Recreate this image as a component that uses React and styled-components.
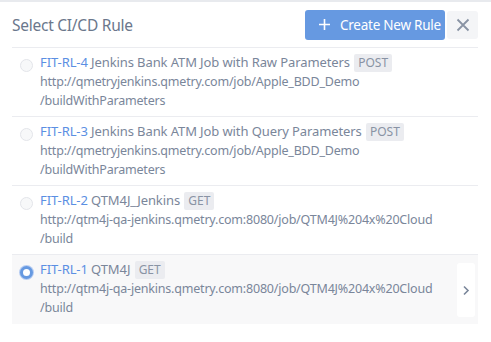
import React, { useState } from 'react';
import styled, { createGlobalStyle } from 'styled-components';

const rules = [
  {
    id: 'FIT-RL-4',
    name: 'Jenkins Bank ATM Job with Raw Parameters',
    method: 'POST',
    url: ['http://qmetryjenkins.qmetry.com/job/Apple_BDD_Demo', '/buildWithParameters'],
  },
  {
    id: 'FIT-RL-3',
    name: 'Jenkins Bank ATM Job with Query Parameters',
    method: 'POST',
    url: ['http://qmetryjenkins.qmetry.com/job/Apple_BDD_Demo', '/buildWithParameters'],
  },
  {
    id: 'FIT-RL-2',
    name: 'QTM4J_Jenkins',
    method: 'GET',
    url: ['http://qtm4j-qa-jenkins.qmetry.com:8080/job/QTM4J%204x%20Cloud', '/build'],
  },
  {
    id: 'FIT-RL-1',
    name: 'QTM4J',
    method: 'GET',
    url: ['http://qtm4j-qa-jenkins.qmetry.com:8080/job/QTM4J%204x%20Cloud', '/build'],
  },
];

const App = () => {
  const [selected, setSelected] = useState('FIT-RL-1');

  return (
    <>
      <GlobalStyle />
      <Panel>
        <Header>
          <Title>Select CI/CD Rule</Title>
          <Actions>
            <CreateButton>
              <svg width="13" height="13" viewBox="0 0 13 13">
                <path d="M6.5 1v11M1 6.5h11" stroke="#fff" strokeWidth="1.6" />
              </svg>
              Create New Rule
            </CreateButton>
            <CloseButton aria-label="close">
              <svg width="14" height="14" viewBox="0 0 14 14">
                <path d="M1.5 1.5l11 11M12.5 1.5l-11 11" stroke="#8993a4" strokeWidth="1.8" />
              </svg>
            </CloseButton>
          </Actions>
        </Header>
        <List>
          {rules.map((rule) => {
            const active = rule.id === selected;
            return (
              <Row key={rule.id} $active={active} onClick={() => setSelected(rule.id)}>
                <Radio $checked={active} />
                <Body>
                  <NameLine>
                    <RuleId>{rule.id}</RuleId> {rule.name} <Method>{rule.method}</Method>
                  </NameLine>
                  <Line>{rule.url[0]}</Line>
                  <Line>{rule.url[1]}</Line>
                </Body>
                {active && (
                  <Chevron>
                    <svg width="8" height="11" viewBox="0 0 8 11">
                      <path d="M2 1.5l4 4-4 4" fill="none" stroke="#7a869a" strokeWidth="1.6" />
                    </svg>
                  </Chevron>
                )}
              </Row>
            );
          })}
        </List>
      </Panel>
    </>
  );
};

export default App;

const GlobalStyle = createGlobalStyle`
  body {
    margin: 0;
    background: #fff;
    font-family: "Noto Sans", "Open Sans", sans-serif;
  }
`;

const Panel = styled.div`
  width: 491px;
  height: 342px;
  box-sizing: border-box;
  border-top: 2px solid #e8eaee;
  padding: 0 13px 0 12px;
  background: #fff;
`;

const Header = styled.div`
  display: flex;
  align-items: center;
  justify-content: space-between;
  height: 45px;
  border-bottom: 1px solid #ebecf0;
`;

const Title = styled.h1`
  margin: 0;
  font-size: 15.5px;
  font-weight: 400;
  color: #6b778c;
  letter-spacing: -0.25px;
`;

const Actions = styled.div`
  display: flex;
  align-items: center;
  gap: 2px;
`;

const CreateButton = styled.button`
  display: flex;
  align-items: center;
  gap: 9px;
  height: 30px;
  width: 140px;
  padding: 0 0 0 13px;
  border: none;
  border-radius: 3px;
  background: #6699e1;
  color: #fff;
  font-family: inherit;
  font-size: 13.5px;
  letter-spacing: -0.25px;
  white-space: nowrap;
  cursor: pointer;
`;

const CloseButton = styled.button`
  display: flex;
  align-items: center;
  justify-content: center;
  width: 31px;
  height: 28px;
  border: none;
  border-radius: 3px;
  background: #f4f5f7;
  cursor: pointer;
`;

const List = styled.div`
  display: flex;
  flex-direction: column;
`;

const Row = styled.div`
  display: flex;
  align-items: flex-start;
  gap: 7px;
  box-sizing: border-box;
  height: 69px;
  padding: 5px 3px 5px 8px;
  border-bottom: 1px solid ${({ $active }) => ($active ? 'transparent' : '#ebecf0')};
  background: ${({ $active }) => ($active ? '#f8f8f9' : '#fff')};
  cursor: pointer;
`;

const Radio = styled.span`
  flex: none;
  box-sizing: border-box;
  width: 13px;
  height: 13px;
  margin-top: 6px;
  border-radius: 50%;
  border: ${({ $checked }) => ($checked ? '3.5px solid #6699e1' : '1px solid #e3e5ea')};
  background: ${({ $checked }) => ($checked ? '#fff' : '#f7f8f9')};
  box-shadow: ${({ $checked }) => ($checked ? '0 0 0 1px #b7cdf2' : 'none')};
`;

const Body = styled.div`
  flex: 1;
  min-width: 0;
  font-size: 12.5px;
  letter-spacing: -0.2px;
  color: #7a869a;
`;

const Line = styled.div`
  line-height: 19px;
  white-space: nowrap;
`;

const NameLine = styled(Line)`
  font-size: 13px;
  letter-spacing: -0.1px;
`;

const RuleId = styled.span`
  color: #5b8fe3;
`;

const Method = styled.span`
  display: inline-block;
  margin-left: 1px;
  padding: 0 4px;
  line-height: 18px;
  border-radius: 2px;
  background: #ebecf0;
  color: #8993a4;
  font-size: 12px;
  letter-spacing: 0;
`;

const Chevron = styled.div`
  flex: none;
  display: flex;
  align-items: center;
  justify-content: center;
  width: 18px;
  height: 54px;
  margin-top: 3px;
  border-radius: 3px;
  background: #fff;
`;
